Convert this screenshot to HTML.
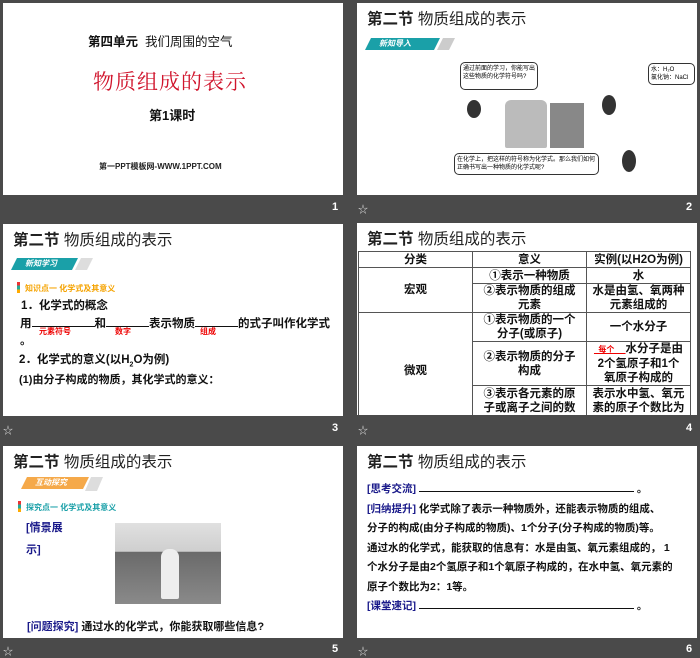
<!DOCTYPE html><html><head><meta charset="utf-8"><style>
*{margin:0;padding:0;box-sizing:border-box}
body{width:700px;height:657px;background:#4a4a4a;position:relative;overflow:hidden;font-family:"Liberation Sans","Noto Sans CJK SC",sans-serif}
.s{position:absolute;background:#fff;width:340px;height:192px;overflow:hidden}
.a{position:absolute;white-space:nowrap}
.n{position:absolute;color:#fff;font-size:11px;font-weight:bold}
.st{position:absolute;color:#ddd;font-size:10px}
.t{position:absolute;left:10px;top:4px;font-size:15.5px;color:#222}
.t b{font-weight:bold}
.bd{font-weight:bold;color:#111;font-size:11.5px}
.tag{position:absolute;height:12px;color:#fff;font-size:8px;font-style:italic;font-weight:bold;padding-left:14px;line-height:12px}
table{border-collapse:collapse;position:absolute;left:1px;top:28px;width:333px;font-size:11.5px;font-weight:bold;color:#111;table-layout:fixed}
td{border:1px solid #555;text-align:center;line-height:14px;padding:0 5px;vertical-align:middle}
</style></head><body>

<div class="s" style="left:3px;top:3px">
<div class="a" style="left:85px;top:28px;font-size:12.5px;color:#111"><b>第四单元</b>&nbsp; 我们周围的空气</div>
<div class="a" style="left:90px;top:63px;font-size:21px;color:#d0142c;font-family:'Liberation Serif','Noto Serif CJK SC',serif;letter-spacing:1px">物质组成的表示</div>
<div class="a" style="left:146px;top:102px;font-size:13px;font-weight:bold;color:#111">第1课时</div>
<div class="a" style="left:96px;top:158px;font-size:8px;font-weight:bold;color:#222">第一PPT模板网-WWW.1PPT.COM</div>
</div>
<div class="n" style="left:332px;top:201px">1</div>

<div class="s" style="left:357px;top:3px">
<div class="t"><b>第二节</b> 物质组成的表示</div>
<div class="tag" style="left:8px;top:35px;width:75px;background:#1aa0a8;clip-path:polygon(6px 0,100% 0,calc(100% - 6px) 100%,0 100%)">新知导入</div>
<div class="a" style="left:80px;top:35px;width:18px;height:12px;background:#ccc;clip-path:polygon(6px 0,100% 0,12px 100%,0 100%)"></div>
<div style="position:absolute;left:103px;top:59px;width:78px;height:28px;border:1px solid #333;border-radius:5px;font-size:6px;padding:2px;line-height:8px">通过前面的学习，你能写出这些物质的化学符号吗?</div>
<div style="position:absolute;left:291px;top:60px;width:47px;height:22px;border:1px solid #333;border-radius:5px;font-size:6px;padding:2px;line-height:8px">水：H₂O<br>氯化钠：NaCl</div>
<div style="position:absolute;left:97px;top:150px;width:145px;height:22px;border:1px solid #333;border-radius:5px;font-size:6px;padding:2px;line-height:8px">在化学上，把这样的符号称为化学式。那么我们如何正确书写出一种物质的化学式呢?</div>
<div style="position:absolute;left:148px;top:97px;width:42px;height:48px;background:#bbb;border-radius:6px 6px 2px 2px"></div>
<div style="position:absolute;left:193px;top:100px;width:34px;height:45px;background:#888"></div>
<div style="position:absolute;left:110px;top:97px;width:14px;height:18px;background:#333;border-radius:50%"></div>
<div style="position:absolute;left:245px;top:92px;width:14px;height:20px;background:#333;border-radius:50%"></div>
<div style="position:absolute;left:265px;top:147px;width:14px;height:22px;background:#333;border-radius:50%"></div>
</div>
<div class="st" style="left:358px;top:201px">☆</div>
<div class="n" style="left:686px;top:201px">2</div>

<div class="s" style="left:3px;top:224px">
<div class="t"><b>第二节</b> 物质组成的表示</div>
<div class="tag" style="left:8px;top:34px;width:67px;background:#1aa0a8;clip-path:polygon(6px 0,100% 0,calc(100% - 6px) 100%,0 100%)">新知学习</div>
<div class="a" style="left:72px;top:34px;width:18px;height:12px;background:#ddd;clip-path:polygon(6px 0,100% 0,12px 100%,0 100%)"></div>
<div class="a" style="left:14px;top:58px;width:3px;height:11px;background:linear-gradient(#e33 33%,#2a9 33% 66%,#fa0 66%)"></div>
<div class="a" style="left:22px;top:59px;font-size:8px;font-weight:bold;color:#f5a300">知识点一 化学式及其意义</div>
<div class="a bd" style="left:18px;top:73px">1．化学式的概念</div>
<div class="a bd" style="left:17px;top:91px">用<span style="display:inline-block;width:63px;border-bottom:1px solid #111"></span>和<span style="display:inline-block;width:43px;border-bottom:1px solid #111"></span>表示物质<span style="display:inline-block;width:43px;border-bottom:1px solid #111"></span>的式子叫作化学式</div>
<div class="a" style="left:36px;top:102px;font-size:8px;font-weight:bold;color:#e00">元素符号</div>
<div class="a" style="left:112px;top:102px;font-size:8px;font-weight:bold;color:#e00">数字</div>
<div class="a" style="left:197px;top:102px;font-size:8px;font-weight:bold;color:#e00">组成</div>
<div class="a bd" style="left:17px;top:108px">。</div>
<div class="a bd" style="left:16px;top:127px">2．化学式的意义(以H<sub style="font-size:7px">2</sub>O为例)</div>
<div class="a bd" style="left:16px;top:147px;font-size:11px">(1)由分子构成的物质，其化学式的意义：</div>
</div>
<div class="st" style="left:3px;top:422px">☆</div>
<div class="n" style="left:332px;top:422px">3</div>

<div class="s" style="left:357px;top:223px">
<div class="t"><b>第二节</b> 物质组成的表示</div>
<table>
<colgroup><col style="width:114px"><col style="width:114px"><col></colgroup>
<tr style="height:16px"><td>分类</td><td>意义</td><td>实例(以H2O为例)</td></tr>
<tr style="height:16px"><td rowspan="2">宏观</td><td>①表示一种物质</td><td>水</td></tr>
<tr style="height:28px"><td>②表示物质的组成元素</td><td>水是由氢、氧两种元素组成的</td></tr>
<tr style="height:29px"><td rowspan="3">微观</td><td>①表示物质的一个分子(或原子)</td><td>一个水分子</td></tr>
<tr style="height:42px"><td>②表示物质的分子构成</td><td><u style="color:#e00;font-size:8px">&nbsp;&nbsp;每个&nbsp;&nbsp;&nbsp;&nbsp;&nbsp;</u>水分子是由2个氢原子和1个氧原子构成的</td></tr>
<tr style="height:44px"><td>③表示各元素的原子或离子之间的数量关系</td><td>表示水中氢、氧元素的原子个数比为2：1</td></tr>
</table>
</div>
<div class="st" style="left:358px;top:422px">☆</div>
<div class="n" style="left:686px;top:422px">4</div>

<div class="s" style="left:3px;top:446px">
<div class="t"><b>第二节</b> 物质组成的表示</div>
<div class="tag" style="left:18px;top:31px;width:68px;background:#f5a94a;clip-path:polygon(6px 0,100% 0,calc(100% - 6px) 100%,0 100%)">互动探究</div>
<div class="a" style="left:82px;top:31px;width:18px;height:14px;background:#ddd;clip-path:polygon(6px 0,100% 0,12px 100%,0 100%)"></div>
<div class="a" style="left:15px;top:55px;width:3px;height:11px;background:linear-gradient(#e33 33%,#2a9 33% 66%,#fa0 66%)"></div>
<div class="a" style="left:23px;top:56px;font-size:8px;font-weight:bold;color:#1aa0a8">探究点一 化学式及其意义</div>
<div class="a" style="left:23px;top:71px;font-size:11px;font-weight:bold;color:#1a1a8a;line-height:22px">[情景展<br>示]</div>
<div class="a" style="left:112px;top:77px;width:106px;height:81px;background:linear-gradient(#e0e0e0 0,#cfcfcf 35%,#6a6a6a 36%,#8a8a8a 100%)"></div>
<div class="a" style="left:158px;top:103px;width:18px;height:50px;background:#eee;border-radius:8px 8px 2px 2px"></div>
<div class="a" style="left:24px;top:172px;font-size:11px;font-weight:bold;color:#111"><span style="color:#1a1a8a">[问题探究]</span> 通过水的化学式，你能获取哪些信息?</div>
</div>
<div class="st" style="left:3px;top:643px">☆</div>
<div class="n" style="left:332px;top:643px">5</div>

<div class="s" style="left:357px;top:446px">
<div class="t"><b>第二节</b> 物质组成的表示</div>
<div class="a bd" style="left:10px;top:34px;font-size:10.5px;line-height:19.5px;white-space:normal;width:328px">
<span style="color:#1a1a8a">[思考交流]</span> <span style="display:inline-block;width:215px;border-bottom:1px solid #111"></span> 。<br>
<span style="color:#1a1a8a">[归纳提升]</span> 化学式除了表示一种物质外，还能表示物质的组成、<br>分子的构成(由分子构成的物质)、1个分子(分子构成的物质)等。<br>通过水的化学式，能获取的信息有：水是由氢、氧元素组成的， 1<br>个水分子是由2个氢原子和1个氧原子构成的，在水中氢、氧元素的<br>原子个数比为2：1等。<br>
<span style="color:#1a1a8a">[课堂速记]</span> <span style="display:inline-block;width:215px;border-bottom:1px solid #111"></span> 。</div>
</div>
<div class="st" style="left:358px;top:643px">☆</div>
<div class="n" style="left:686px;top:643px">6</div>
</body></html>
